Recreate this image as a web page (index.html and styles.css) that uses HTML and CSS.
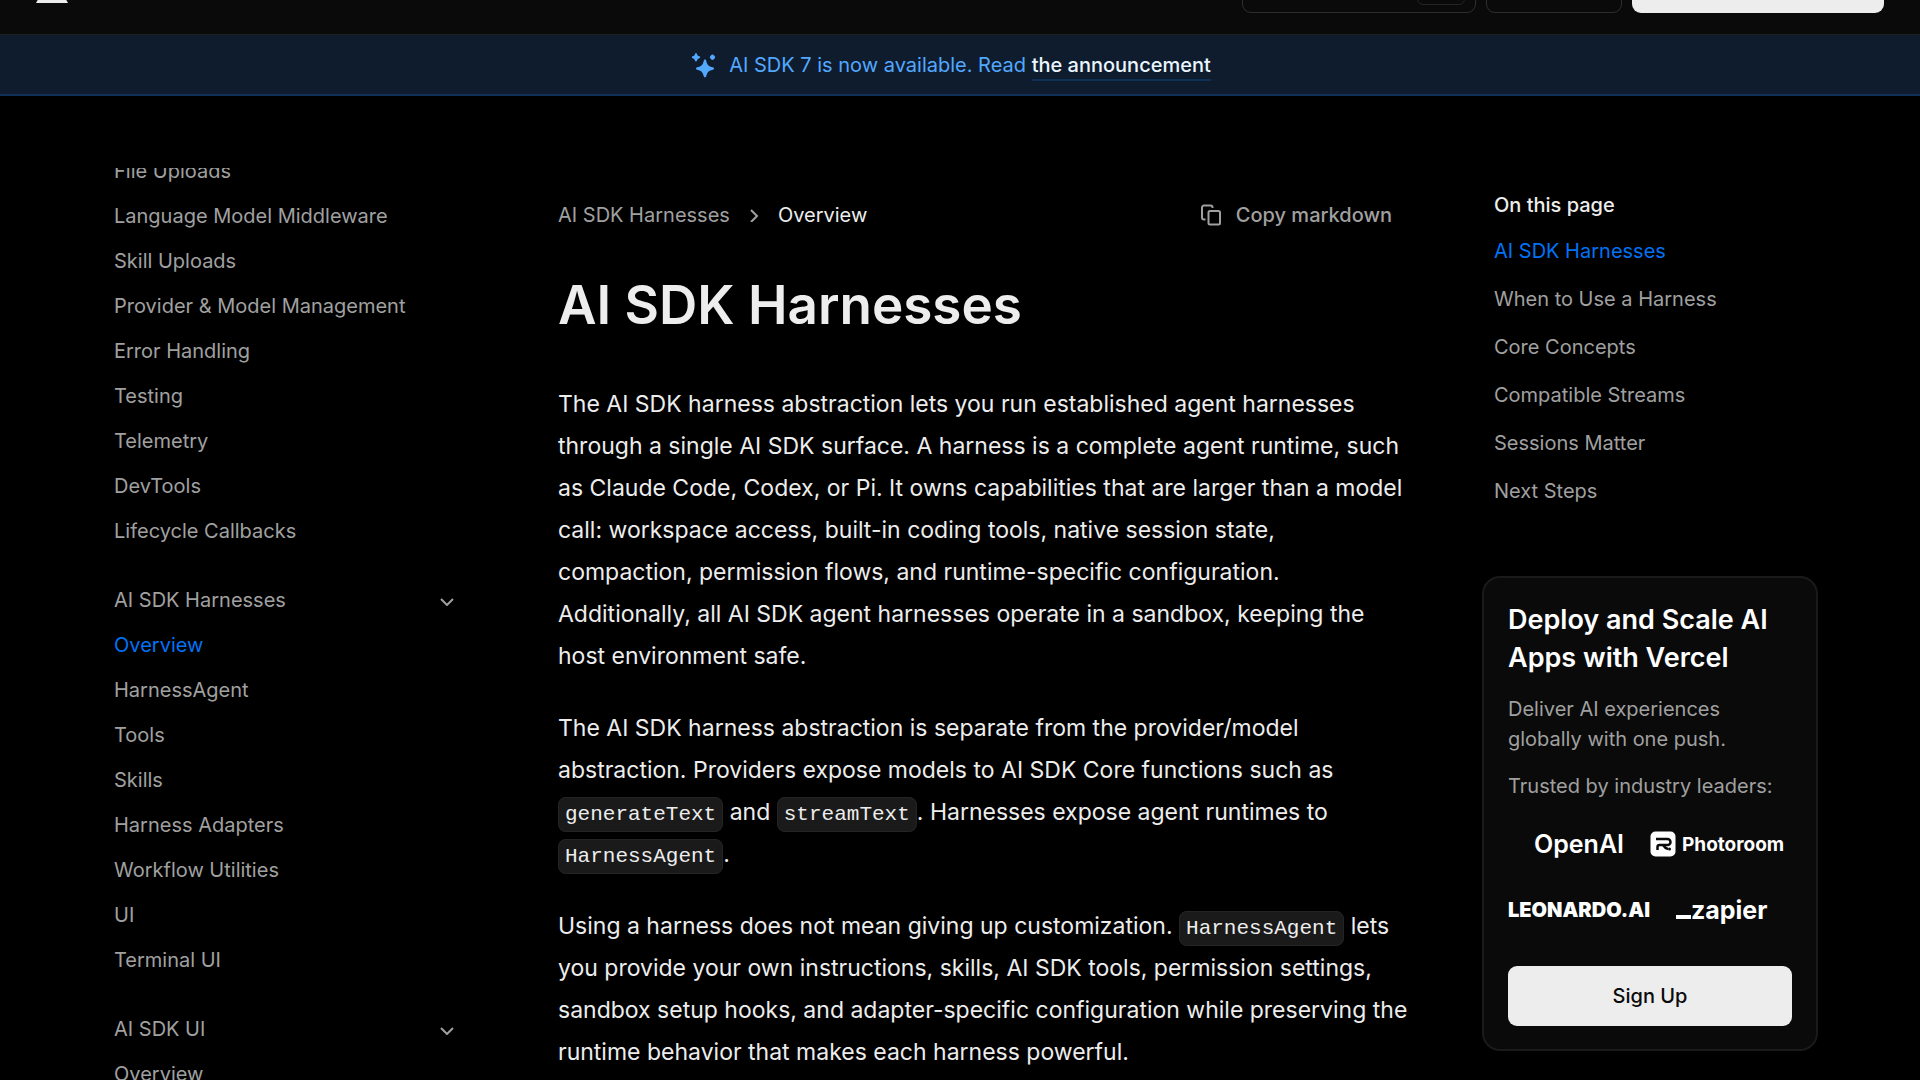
FILE: index.html
```html
<!DOCTYPE html>
<html lang="en">
  <head>
    <meta charset="UTF-8" />
    <meta name="viewport" content="width=device-width, initial-scale=1.0" />
    <title>AI SDK Harnesses: Overview</title>
    <link rel="stylesheet" href="styles.css" />
  </head>
  <body>
    <header class="site-header">
      <a href="#" class="logo" aria-label="Home">
        <svg width="32" height="28" viewBox="0 0 32 28"><path d="M16 0L32 28H0z" fill="#ededed" /></svg>
      </a>
      <div class="header-actions">
        <button class="search-btn" aria-label="Search"><kbd></kbd></button>
        <button class="feedback-btn" aria-label="Feedback"></button>
        <button class="login-btn" aria-label="Sign in"></button>
      </div>
    </header>

    <div class="banner">
      <svg class="sparkles" width="28" height="28" viewBox="0 0 28 28" fill="currentColor">
        <path d="M14 8.500c.7 0 1 .5 1.200 1.200 1 4.200 2.400 5.600 6.600 6.600.7.200 1.200.5 1.200 1.200s-.5 1-1.200 1.200c-4.200 1-5.600 2.400-6.600 6.600-.2.700-.5 1.200-1.200 1.200s-1-.5-1.200-1.200c-1-4.200-2.400-5.600-6.600-6.600-.7-.2-1.200-.5-1.200-1.200s.5-1 1.200-1.200c4.200-1 5.600-2.400 6.600-6.600.2-.7.500-1.200 1.200-1.200z" />
        <path d="M5 2.300c.7 0 1 .5 1.200 1.100.3 1 .7 1.400 1.700 1.700.7.200 1.200.5 1.200 1.200s-.5 1-1.200 1.200c-1 .3-1.400.7-1.700 1.700-.2.700-.5 1.200-1.200 1.200s-1-.5-1.200-1.200c-.3-1-.7-1.400-1.700-1.700C1.400 7.300.900 7 .9 6.300s.5-1 1.200-1.200c1-.3 1.400-.7 1.700-1.700.2-.6.500-1.100 1.200-1.100z" />
        <path d="M21.500 3.600c.8 0 2.700 1.900 2.700 2.700s-1.900 2.700-2.700 2.700-2.700-1.900-2.700-2.700 1.900-2.700 2.700-2.700z" />
      </svg>
      <p>AI SDK 7 is now available. Read <a href="#">the announcement</a></p>
    </div>

    <div class="layout">
      <nav class="sidebar" aria-label="Docs">
        <ul class="nav-list">
          <li><a href="#">File Uploads</a></li>
          <li><a href="#">Language Model Middleware</a></li>
          <li><a href="#">Skill Uploads</a></li>
          <li><a href="#">Provider &amp; Model Management</a></li>
          <li><a href="#">Error Handling</a></li>
          <li><a href="#">Testing</a></li>
          <li><a href="#">Telemetry</a></li>
          <li><a href="#">DevTools</a></li>
          <li><a href="#">Lifecycle Callbacks</a></li>
        </ul>
        <button class="nav-group">
          AI SDK Harnesses
          <svg width="14" height="10" viewBox="0 0 14 10"><path d="M1 3l6 6 6-6" /></svg>
        </button>
        <ul class="nav-list">
          <li><a href="#" class="active">Overview</a></li>
          <li><a href="#">HarnessAgent</a></li>
          <li><a href="#">Tools</a></li>
          <li><a href="#">Skills</a></li>
          <li><a href="#">Harness Adapters</a></li>
          <li><a href="#">Workflow Utilities</a></li>
          <li><a href="#">UI</a></li>
          <li><a href="#">Terminal UI</a></li>
        </ul>
        <button class="nav-group">
          AI SDK UI
          <svg width="14" height="10" viewBox="0 0 14 10"><path d="M1 3l6 6 6-6" /></svg>
        </button>
        <ul class="nav-list">
          <li><a href="#">Overview</a></li>
        </ul>
      </nav>

      <main class="content">
        <div class="top-row">
          <div class="breadcrumb">
            <a href="#">AI SDK Harnesses</a>
            <svg width="10" height="14" viewBox="0 0 10 14"><path d="M2 2l6 6-6 6" /></svg>
            <span>Overview</span>
          </div>
          <button class="copy-btn">
            <svg width="22" height="22" viewBox="0 0 22 22">
              <path d="M5.500 15.500H4a2 2 0 0 1-2-2V3.500a2 2 0 0 1 2-2h6.500a2 2 0 0 1 2 2V4" />
              <rect x="8.500" y="7" width="11.500" height="13.500" rx="1.500" />
            </svg>
            Copy markdown
          </button>
        </div>

        <h1>AI SDK Harnesses</h1>

        <p>
          The AI SDK harness abstraction lets you run established agent harnesses
          through a single AI SDK surface. A harness is a complete agent runtime,
          such as Claude Code, Codex, or Pi. It owns capabilities that are larger
          than a model call: workspace access, built-in coding tools, native
          session state, compaction, permission flows, and runtime-specific
          configuration. Additionally, all AI SDK agent harnesses operate in a
          sandbox, keeping the host environment safe.
        </p>
        <p>
          The AI SDK harness abstraction is separate from the provider/model
          abstraction. Providers expose models to AI SDK Core functions such as
          <code>generateText</code> and <code>streamText</code>. Harnesses expose
          agent runtimes to <code>HarnessAgent</code>.
        </p>
        <p>
          Using a harness does not mean giving up customization.
          <code>HarnessAgent</code> lets you provide your own instructions,
          skills, AI SDK tools, permission settings, sandbox setup hooks, and
          adapter-specific configuration while preserving the runtime behavior
          that makes each harness powerful.
        </p>
      </main>

      <aside class="rail">
        <nav class="toc" aria-label="On this page">
          <h2>On this page</h2>
          <ul>
            <li><a href="#" class="active">AI SDK Harnesses</a></li>
            <li><a href="#">When to Use a Harness</a></li>
            <li><a href="#">Core Concepts</a></li>
            <li><a href="#">Compatible Streams</a></li>
            <li><a href="#">Sessions Matter</a></li>
            <li><a href="#">Next Steps</a></li>
          </ul>
        </nav>

        <section class="promo">
          <h3>Deploy and Scale AI Apps with Vercel</h3>
          <p>Deliver AI experiences globally with one push.</p>
          <p>Trusted by industry leaders:</p>
          <div class="brands">
            <span class="brand openai">OpenAI</span>
            <span class="brand photoroom">
              <svg width="26" height="26" viewBox="0 0 26 26">
                <rect x="0.500" y="0.500" width="25" height="25" rx="5" fill="#fff" />
                <path d="M6 8h11.500a3 3 0 0 1 0 6H9.500a2 2 0 0 0-2 2v3" fill="none" stroke="#0a0a0a" stroke-width="2.500" />
                <path d="M13.500 14.500c1.500 2.500 3 3.200 4.500 3.500" fill="none" stroke="#0a0a0a" stroke-width="2.500" />
                <circle cx="19.500" cy="18" r="1.500" fill="#0a0a0a" />
              </svg>
              Photoroom
            </span>
          </div>
          <div class="brands">
            <span class="brand leonardo">LEONARDO.AI</span>
            <span class="brand zapier">
              <svg width="15" height="4" viewBox="0 0 15 4"><path d="M0 0h15v4H0z" fill="#fff" /></svg>zapier
            </span>
          </div>
          <button class="signup-btn">Sign Up</button>
        </section>
      </aside>
    </div>
  </body>
</html>
```
FILE: styles.css
```css
* {
  margin: 0;
  padding: 0;
  box-sizing: border-box;
}
body {
  background-color: #000;
  color: #ededed;
  font-family: Inter, "Liberation Sans", sans-serif;
  font-size: 20px;
}
a {
  color: inherit;
  text-decoration: none;
}
ul {
  list-style: none;
}
button {
  border: none;
  background: none;
  color: inherit;
  font: inherit;
  cursor: pointer;
}
svg {
  flex-shrink: 0;
}

/* header, partly scrolled out of view */
.site-header {
  display: flex;
  align-items: center;
  justify-content: space-between;
  height: 92px;
  margin-top: -57px;
  padding: 0 36px;
  background-color: #0a0a0a;
  border-bottom: 1px solid #1f1f1f;
}
.logo svg {
  display: block;
}
.header-actions {
  display: flex;
  gap: 10px;
}
.header-actions button {
  height: 48px;
  border: 1px solid #2e2e2e;
  border-radius: 9px;
}
.search-btn {
  display: flex;
  align-items: center;
  justify-content: flex-end;
  width: 234px;
  padding-right: 10px;
}
.search-btn kbd {
  width: 48px;
  height: 32px;
  border: 1px solid #242424;
  border-radius: 6px;
}
.feedback-btn {
  width: 136px;
}
.header-actions .login-btn {
  width: 252px;
  border: none;
  background-color: #ededed;
}

.banner {
  display: flex;
  align-items: center;
  justify-content: center;
  gap: 10px;
  height: 61px;
  padding-right: 18px;
  background-color: #0f1c2e;
  border-bottom: 2px solid #10305a;
  color: #52a8ff;
}
.banner a {
  padding-bottom: 2px;
  border-bottom: 2px solid #10305a;
  color: #eaf6ff;
  font-weight: 500;
}

.layout {
  display: grid;
  grid-template-columns: 372px minmax(0, 1fr) 336px;
  column-gap: 72px;
  padding: 0 102px 0 114px;
}

.sidebar {
  height: calc(100vh - 168px);
  margin-top: 72px;
  padding-right: 32px;
  overflow: hidden;
  color: #a0a0a0;
}
.sidebar > .nav-list:first-child {
  margin-top: -19px;
}
.nav-list a {
  display: block;
  line-height: 45px;
}
.nav-list .active,
.toc .active {
  color: #0072f5;
}
.nav-group {
  display: flex;
  align-items: center;
  justify-content: space-between;
  width: 100%;
  margin-top: 24px;
  line-height: 45px;
}
.nav-group svg,
.breadcrumb svg,
.copy-btn svg {
  fill: none;
  stroke: #a0a0a0;
  stroke-width: 2;
}

.top-row {
  display: flex;
  align-items: center;
  justify-content: space-between;
  height: 48px;
  margin-top: 95px;
  padding-right: 18px;
}
.breadcrumb {
  display: flex;
  align-items: center;
  gap: 19px;
  color: #a0a0a0;
}
.breadcrumb span {
  color: #ededed;
}
.copy-btn {
  display: flex;
  align-items: center;
  gap: 14px;
  color: #a0a0a0;
  font-weight: 500;
}
h1 {
  margin-top: 36px;
  font-size: 53px;
  font-weight: 600;
  line-height: 60px;
}
.content p {
  margin-top: 30px;
  font-size: 23px;
  line-height: 42px;
}
h1 + p {
  padding-top: 18px;
}
code {
  padding: 5px 6px;
  border: 1px solid #242424;
  border-radius: 8px;
  background-color: #1a1a1a;
  font-family: "Liberation Mono", monospace;
  font-size: 21px;
  line-height: 24px;
}

.rail {
  margin-top: 88px;
}
.toc {
  padding-left: 12px;
  color: #a0a0a0;
}
.toc h2 {
  color: #ededed;
  font-size: 20px;
  font-weight: 500;
  line-height: 43px;
}
.toc a {
  display: block;
  line-height: 48px;
}

.promo {
  margin-top: 61px;
  padding: 23px 24px;
  background-color: #0a0a0a;
  border: 2px solid #1a1a1a;
  border-radius: 18px;
}
.promo h3 {
  color: #fff;
  font-size: 27px;
  font-weight: 600;
  line-height: 38px;
}
.promo p {
  margin-top: 17px;
  color: #a0a0a0;
  line-height: 30px;
}
.brands {
  display: flex;
  align-items: center;
  gap: 26px;
  height: 66px;
  color: #fff;
}
.promo p + .brands {
  margin-top: 10px;
}
.brand {
  display: flex;
  align-items: center;
}
.openai {
  padding-left: 26px;
  font-size: 25px;
  font-weight: 600;
}
.photoroom {
  gap: 6px;
  font-size: 19px;
  font-weight: 700;
}
.leonardo {
  font-size: 20px;
  font-weight: 900;
}
.zapier {
  align-items: baseline;
  font-size: 25px;
  font-weight: 700;
}
.signup-btn {
  width: 100%;
  height: 60px;
  margin-top: 23px;
  border-radius: 9px;
  background-color: #ededed;
  color: #0a0a0a;
  font-weight: 500;
}
```
